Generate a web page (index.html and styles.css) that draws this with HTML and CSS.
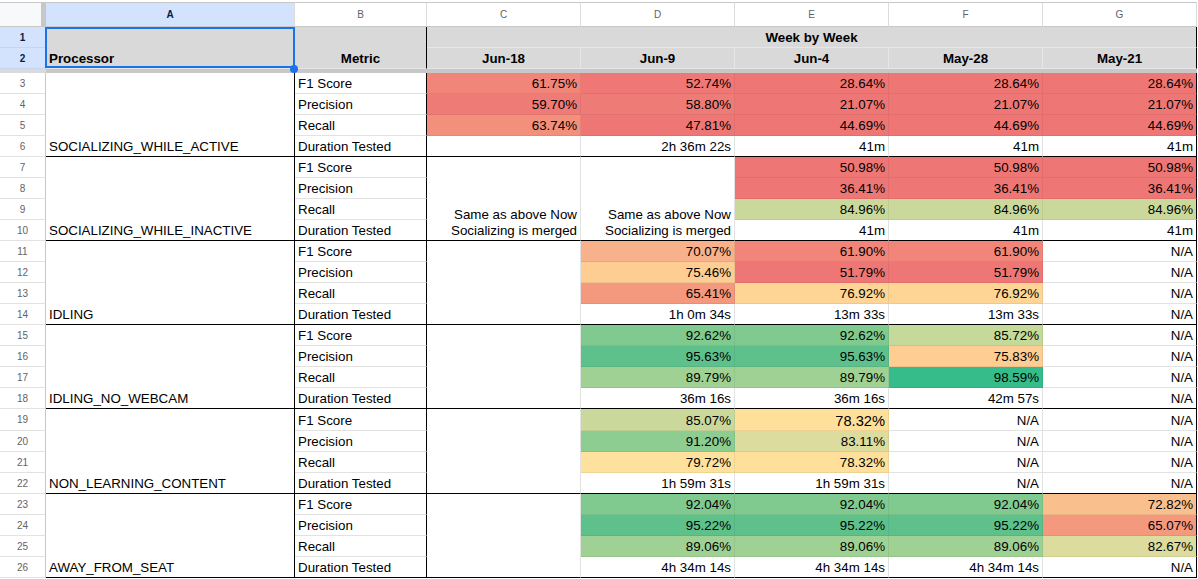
FILE: index.html
```html
<!DOCTYPE html>
<html>
<head>
<meta charset="utf-8">
<title>Week by Week</title>
<link rel="stylesheet" href="styles.css">
</head>
<body>
<div class="sheet">
  <!-- column letters -->
  <div class="corner"></div>
  <div class="ch on">A</div>
  <div class="ch">B</div>
  <div class="ch">C</div>
  <div class="ch">D</div>
  <div class="ch">E</div>
  <div class="ch">F</div>
  <div class="ch">G</div>

  <!-- row 1 -->
  <div class="rn on">1</div>
  <div class="c hd sel span2 br">Processor</div>
  <div class="c hd ctr span2 br">Metric</div>
  <div class="c hd ctr cspan5 br">Week by Week</div>
  <!-- row 2 -->
  <div class="rn on">2</div>
  <div class="c hd ctr">Jun-18</div>
  <div class="c hd ctr">Jun-9</div>
  <div class="c hd ctr">Jun-4</div>
  <div class="c hd ctr">May-28</div>
  <div class="c hd ctr br">May-21</div>

  <!-- freeze bar -->
  <div class="freeze-rn"></div>
  <div class="freeze"></div>

  <!-- rows 3-6 -->
  <div class="rn">3</div>
  <div class="c span4 br gb">SOCIALIZING_WHILE_ACTIVE</div>
  <div class="c br">F1 Score</div>
  <div class="c num cf r61">61.75%</div>
  <div class="c num cf r52">52.74%</div>
  <div class="c num cf red">28.64%</div>
  <div class="c num cf red">28.64%</div>
  <div class="c num cf red br">28.64%</div>

  <div class="rn">4</div>
  <div class="c br">Precision</div>
  <div class="c num cf r59">59.70%</div>
  <div class="c num cf r59">58.80%</div>
  <div class="c num cf red">21.07%</div>
  <div class="c num cf red">21.07%</div>
  <div class="c num cf red br">21.07%</div>

  <div class="rn">5</div>
  <div class="c br">Recall</div>
  <div class="c num cf r63">63.74%</div>
  <div class="c num cf red">47.81%</div>
  <div class="c num cf red">44.69%</div>
  <div class="c num cf red">44.69%</div>
  <div class="c num cf red br">44.69%</div>

  <div class="rn">6</div>
  <div class="c br gb">Duration Tested</div>
  <div class="c num gb"></div>
  <div class="c num gb">2h 36m 22s</div>
  <div class="c num gb">41m</div>
  <div class="c num gb">41m</div>
  <div class="c num gb br">41m</div>

  <!-- rows 7-10 -->
  <div class="rn">7</div>
  <div class="c span4 br gb">SOCIALIZING_WHILE_INACTIVE</div>
  <div class="c br">F1 Score</div>
  <div class="c note span4 gb">Same as above Now Socializing is merged</div>
  <div class="c note span4 gb">Same as above Now Socializing is merged</div>
  <div class="c num cf red">50.98%</div>
  <div class="c num cf red">50.98%</div>
  <div class="c num cf red br">50.98%</div>

  <div class="rn">8</div>
  <div class="c br">Precision</div>
  <div class="c num cf red">36.41%</div>
  <div class="c num cf red">36.41%</div>
  <div class="c num cf red br">36.41%</div>

  <div class="rn">9</div>
  <div class="c br">Recall</div>
  <div class="c num cf yg85">84.96%</div>
  <div class="c num cf yg85">84.96%</div>
  <div class="c num cf yg85 br">84.96%</div>

  <div class="rn">10</div>
  <div class="c br gb">Duration Tested</div>
  <div class="c num gb">41m</div>
  <div class="c num gb">41m</div>
  <div class="c num gb br">41m</div>

  <!-- rows 11-14 -->
  <div class="rn">11</div>
  <div class="c span4 br gb">IDLING</div>
  <div class="c br">F1 Score</div>
  <div class="c span4 gb"></div>
  <div class="c num cf o70">70.07%</div>
  <div class="c num cf r61">61.90%</div>
  <div class="c num cf r61">61.90%</div>
  <div class="c num br">N/A</div>

  <div class="rn">12</div>
  <div class="c br">Precision</div>
  <div class="c num cf o75">75.46%</div>
  <div class="c num cf red">51.79%</div>
  <div class="c num cf red">51.79%</div>
  <div class="c num br">N/A</div>

  <div class="rn">13</div>
  <div class="c br">Recall</div>
  <div class="c num cf r65">65.41%</div>
  <div class="c num cf y77">76.92%</div>
  <div class="c num cf y77">76.92%</div>
  <div class="c num br">N/A</div>

  <div class="rn">14</div>
  <div class="c br gb">Duration Tested</div>
  <div class="c num gb">1h 0m 34s</div>
  <div class="c num gb">13m 33s</div>
  <div class="c num gb">13m 33s</div>
  <div class="c num gb br">N/A</div>

  <!-- rows 15-18 -->
  <div class="rn">15</div>
  <div class="c span4 br gb">IDLING_NO_WEBCAM</div>
  <div class="c br">F1 Score</div>
  <div class="c span4 gb"></div>
  <div class="c num cf g92">92.62%</div>
  <div class="c num cf g92">92.62%</div>
  <div class="c num cf yg85b">85.72%</div>
  <div class="c num br">N/A</div>

  <div class="rn">16</div>
  <div class="c br">Precision</div>
  <div class="c num cf g95">95.63%</div>
  <div class="c num cf g95">95.63%</div>
  <div class="c num cf o75">75.83%</div>
  <div class="c num br">N/A</div>

  <div class="rn">17</div>
  <div class="c br">Recall</div>
  <div class="c num cf g89">89.79%</div>
  <div class="c num cf g89">89.79%</div>
  <div class="c num cf g98">98.59%</div>
  <div class="c num br">N/A</div>

  <div class="rn">18</div>
  <div class="c br gb">Duration Tested</div>
  <div class="c num gb">36m 16s</div>
  <div class="c num gb">36m 16s</div>
  <div class="c num gb">42m 57s</div>
  <div class="c num gb br">N/A</div>

  <!-- rows 19-22 -->
  <div class="rn">19</div>
  <div class="c span4 br gb">NON_LEARNING_CONTENT</div>
  <div class="c br">F1 Score</div>
  <div class="c span4 gb"></div>
  <div class="c num cf yg85">85.07%</div>
  <div class="c num cf y78 big">78.32%</div>
  <div class="c num">N/A</div>
  <div class="c num br">N/A</div>

  <div class="rn">20</div>
  <div class="c br">Precision</div>
  <div class="c num cf g91">91.20%</div>
  <div class="c num cf yg82">83.11%</div>
  <div class="c num">N/A</div>
  <div class="c num br">N/A</div>

  <div class="rn">21</div>
  <div class="c br">Recall</div>
  <div class="c num cf y79">79.72%</div>
  <div class="c num cf y78">78.32%</div>
  <div class="c num">N/A</div>
  <div class="c num br">N/A</div>

  <div class="rn">22</div>
  <div class="c br gb">Duration Tested</div>
  <div class="c num gb">1h 59m 31s</div>
  <div class="c num gb">1h 59m 31s</div>
  <div class="c num gb">N/A</div>
  <div class="c num gb br">N/A</div>

  <!-- rows 23-26 -->
  <div class="rn">23</div>
  <div class="c span4 br gb">AWAY_FROM_SEAT</div>
  <div class="c br">F1 Score</div>
  <div class="c span4 gb"></div>
  <div class="c num cf g92">92.04%</div>
  <div class="c num cf g92">92.04%</div>
  <div class="c num cf g92">92.04%</div>
  <div class="c num cf o72 br">72.82%</div>

  <div class="rn">24</div>
  <div class="c br">Precision</div>
  <div class="c num cf g95">95.22%</div>
  <div class="c num cf g95">95.22%</div>
  <div class="c num cf g95">95.22%</div>
  <div class="c num cf r65 br">65.07%</div>

  <div class="rn">25</div>
  <div class="c br">Recall</div>
  <div class="c num cf g89">89.06%</div>
  <div class="c num cf g89">89.06%</div>
  <div class="c num cf g89">89.06%</div>
  <div class="c num cf yg82 br">82.67%</div>

  <div class="rn">26</div>
  <div class="c br gb">Duration Tested</div>
  <div class="c num gb">4h 34m 14s</div>
  <div class="c num gb">4h 34m 14s</div>
  <div class="c num gb">4h 34m 14s</div>
  <div class="c num gb br">N/A</div>
</div>
</body>
</html>
```
FILE: styles.css
```css
* { box-sizing: border-box; }

body {
  margin: 0;
  background: #ffffff;
  font-family: "Liberation Sans", Arial, sans-serif;
}

.sheet {
  display: grid;
  grid-template-columns: 46px 249px 132px repeat(5, 154px);
  grid-template-rows: 25px 21px 21px 4px repeat(16, 21px) 22px repeat(7, 21px);
  padding-top: 2px;
  width: 1197px;
}

/* column letter headers */
.corner {
  background: #f8f9fa;
  border-top: 1px solid #c7c7c7;
  border-bottom: 1px solid #c7c7c7;
  border-right: 5px solid #c7c7c7;
}

.ch {
  display: flex;
  align-items: center;
  justify-content: center;
  background: #ffffff;
  border-top: 1px solid #c7c7c7;
  border-bottom: 1px solid #c7c7c7;
  border-right: 1px solid #dadce0;
  font-size: 10px;
  color: #5f6368;
}

.ch.on {
  background: #d3e3fd;
  color: #041e49;
  font-weight: bold;
}

/* row numbers */
.rn {
  display: flex;
  align-items: center;
  justify-content: center;
  background: #ffffff;
  border-right: 1px solid #c7c7c7;
  border-bottom: 1px solid #e2e2e2;
  font-size: 10px;
  color: #5f6368;
}

.rn.on {
  background: #d3e3fd;
  color: #041e49;
  font-weight: bold;
  border-bottom-color: #c6d5ef;
}

/* freeze bar */
.freeze-rn { background: #dadada; }
.freeze { grid-column: 2 / -1; background: #c8c8c8; }

/* cells */
.c {
  display: flex;
  align-items: flex-end;
  min-width: 0;
  overflow: hidden;
  white-space: nowrap;
  padding: 0 3px 1px 3px;
  border-right: 1px solid #e2e2e2;
  border-bottom: 1px solid #e2e2e2;
  font-size: 13.33px;
  line-height: 16px;
  color: #000000;
}

.num { justify-content: flex-end; }
.ctr { justify-content: center; }

.hd {
  background: #d9d9d9;
  font-weight: bold;
  border-right-color: #e6e6e6;
  border-bottom-color: #e6e6e6;
}

.note {
  justify-content: flex-end;
  text-align: right;
  white-space: normal;
}

.span2 { grid-row: span 2; }
.span4 { grid-row: span 4; }
.cspan5 { grid-column: span 5; }

.cf {
  border-right-color: rgba(0, 0, 0, 0.06);
  border-bottom-color: rgba(0, 0, 0, 0.06);
}

.gb { border-bottom-color: #000000; }
.br { border-right-color: #000000; }

.big { font-size: 14.67px; }

/* selection around A1:A2 */
.sel {
  position: relative;
  z-index: 1;
  overflow: visible;
}

.sel::after {
  content: "";
  position: absolute;
  left: -1px;
  top: 0;
  right: -1px;
  bottom: 0;
  border: 2px solid #1a73e8;
}

.sel::before {
  content: "";
  position: absolute;
  right: -4px;
  bottom: -5px;
  width: 8px;
  height: 8px;
  border-radius: 50%;
  background: #1a73e8;
  z-index: 2;
}

/* conditional format colours */
.red  { background: #ee7674; }
.r52  { background: #ef7775; }
.r59  { background: #ef7b76; }
.r61  { background: #f1857a; }
.r63  { background: #f2907c; }
.r65  { background: #f4987e; }
.o70  { background: #f7b18b; }
.o72  { background: #f9c08e; }
.o75  { background: #fdcd93; }
.y77  { background: #fed594; }
.y78  { background: #fee09b; }
.y79  { background: #fee19c; }
.yg82 { background: #dcdc9e; }
.yg85 { background: #cad99b; }
.yg85b { background: #c5d99a; }
.g89  { background: #9fd194; }
.g91  { background: #8ecd91; }
.g92  { background: #80ca8f; }
.g95  { background: #5ec18c; }
.g98  { background: #35bc8a; }
```
